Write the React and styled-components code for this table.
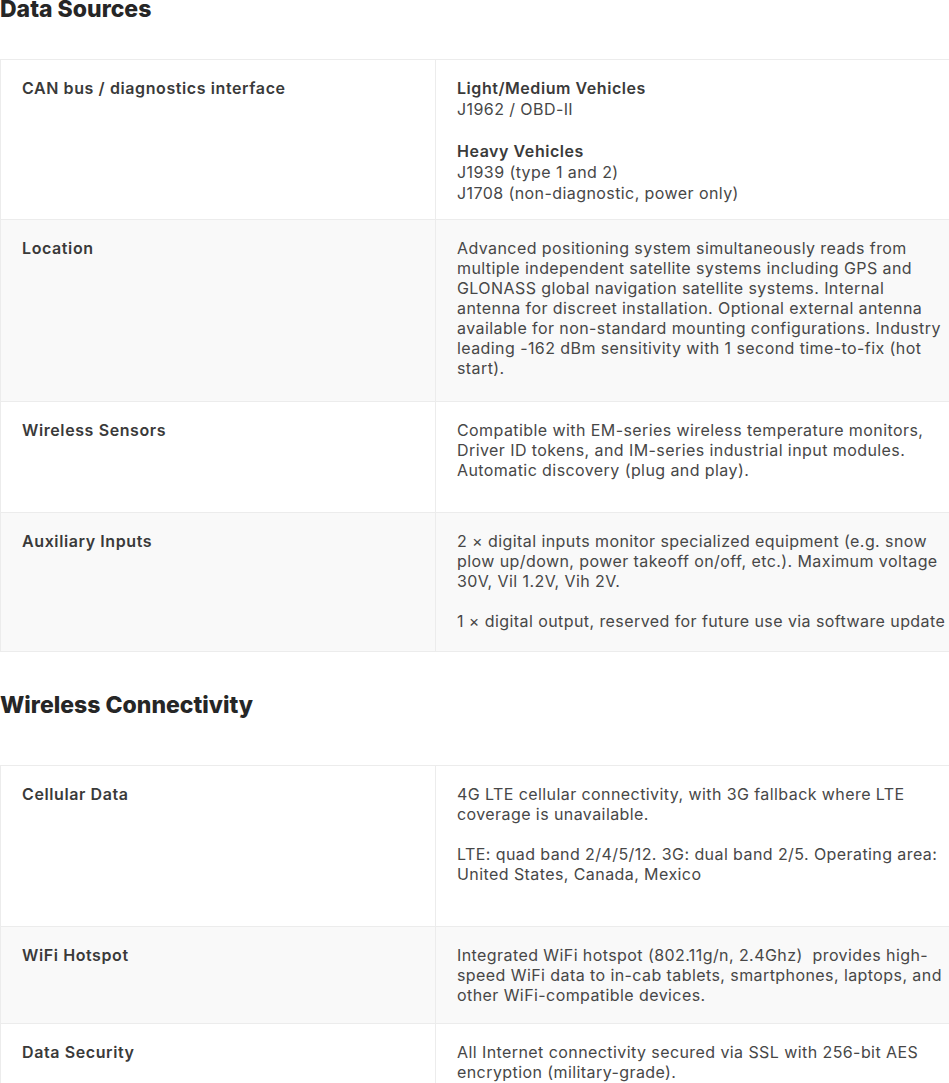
import React from 'react';
import styled, { createGlobalStyle } from 'styled-components';

const GlobalStyle = createGlobalStyle`
  html, body {
    margin: 0;
    padding: 0;
    background: #fff;
    overflow: hidden;
  }
  body {
    font-family: 'Inter', 'Liberation Sans', sans-serif;
    color: #454545;
    -webkit-font-smoothing: antialiased;
  }
`;

const Page = styled.div`
  width: 980px;
`;

const SectionTitle = styled.h2`
  margin: 0 0 ${(p) => p.gap}px;
  padding-top: ${(p) => p.top}px;
  font-family: 'Inter', 'Liberation Sans', sans-serif;
  font-weight: 800;
  font-size: 23px;
  line-height: 18px;
  letter-spacing: 0;
  color: #262626;
`;

const SpecTable = styled.div`
  border-top: 1px solid #ececec;
  border-left: 1px solid #ececec;
`;

const Row = styled.div`
  display: grid;
  grid-template-columns: 435px 1fr;
  background: ${(p) => (p.shaded ? '#f9f9f9' : '#fff')};
  border-bottom: 1px solid #ececec;
`;

const Label = styled.div`
  padding: 18px 21px;
  font-size: 16px;
  line-height: 20px;
  font-weight: 600;
  letter-spacing: 0.6px;
  color: #3a3a3a;
  border-right: 1px solid #ececec;
`;

const Value = styled.div`
  padding: 18px 29px ${(p) => p.pb}px 21px;
  font-size: 16px;
  line-height: ${(p) => p.lh || 20}px;
  letter-spacing: 0.42px;
  color: #474747;

  & p {
    margin: 0 0 ${(p) => p.lh || 20}px;
  }
  & p:last-child {
    margin-bottom: 0;
  }
  & strong {
    font-weight: 600;
    letter-spacing: 0.55px;
    color: #3a3a3a;
  }
`;

const dataSources = [
  {
    label: 'CAN bus / diagnostics interface',
    lh: 21,
    pb: 15,
    body: (
      <>
        <p>
          <strong>Light/Medium Vehicles</strong>
          <br />
          J1962 / OBD-II
        </p>
        <p>
          <strong>Heavy Vehicles</strong>
          <br />
          J1939 (type 1 and 2)
          <br />
          J1708 (non-diagnostic, power only)
        </p>
      </>
    ),
  },
  {
    label: 'Location',
    pb: 23,
    body: (
      <p>
        Advanced positioning system simultaneously reads from multiple independent satellite
        systems including GPS and GLONASS global navigation satellite systems. Internal antenna
        for discreet installation. Optional external antenna available for non-standard mounting
        configurations. Industry leading -162 dBm sensitivity with 1 second time-to-fix (hot
        start).
      </p>
    ),
  },
  {
    label: 'Wireless Sensors',
    pb: 32,
    body: (
      <p>
        Compatible with EM-series wireless temperature monitors, Driver ID tokens, and IM-series
        industrial input modules. Automatic discovery (plug and play).
      </p>
    ),
  },
  {
    label: 'Auxiliary Inputs',
    pb: 20,
    body: (
      <>
        <p>
          2 × digital inputs monitor specialized equipment (e.g. snow plow up/down, power takeoff
          on/off, etc.). Maximum voltage 30V, Vil 1.2V, Vih 2V.
        </p>
        <p>1 × digital output, reserved for future use via software update</p>
      </>
    ),
  },
];

const connectivity = [
  {
    label: 'Cellular Data',
    pb: 42,
    body: (
      <>
        <p>4G LTE cellular connectivity, with 3G fallback where LTE coverage is unavailable.</p>
        <p>
          LTE: quad band 2/4/5/12. 3G: dual band 2/5. Operating area: United States, Canada,
          Mexico
        </p>
      </>
    ),
  },
  {
    label: 'WiFi Hotspot',
    pb: 18,
    body: (
      <p>
        Integrated WiFi hotspot (802.11g/n, 2.4Ghz)&nbsp; provides high-speed WiFi data to in-cab
        tablets, smartphones, laptops, and other WiFi-compatible devices.
      </p>
    ),
  },
  {
    label: 'Data Security',
    pb: 18,
    body: (
      <p>
        All Internet connectivity secured via SSL with 256-bit AES encryption (military-grade).
      </p>
    ),
  },
];

function Specs({ rows }) {
  return (
    <SpecTable>
      {rows.map((r, i) => (
        <Row key={r.label} shaded={i % 2 === 1}>
          <Label>{r.label}</Label>
          <Value pb={r.pb} lh={r.lh}>
            {r.body}
          </Value>
        </Row>
      ))}
    </SpecTable>
  );
}

export default function App() {
  return (
    <Page>
      <GlobalStyle />
      <SectionTitle top={0} gap={41}>
        Data Sources
      </SectionTitle>
      <Specs rows={dataSources} />
      <SectionTitle top={44} gap={51}>
        Wireless Connectivity
      </SectionTitle>
      <Specs rows={connectivity} />
    </Page>
  );
}
